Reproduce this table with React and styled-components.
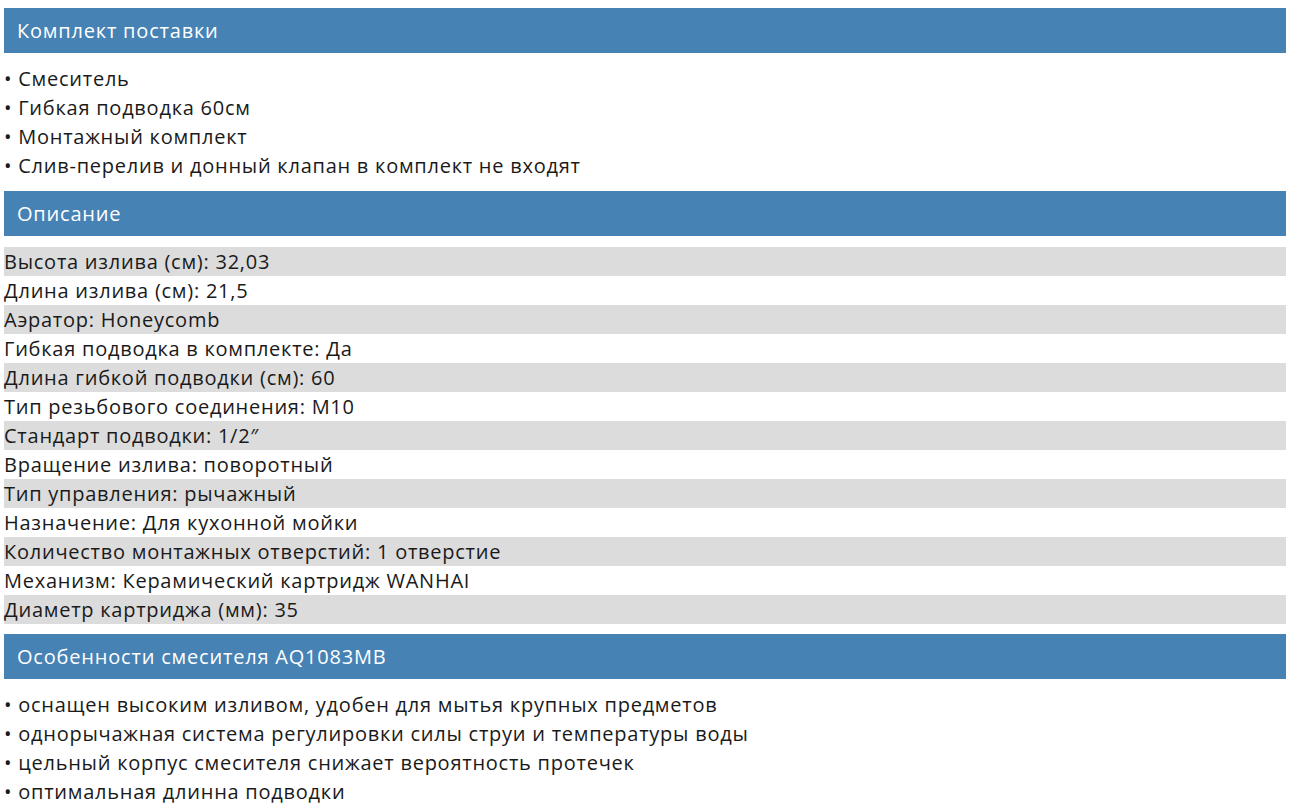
import styled, { createGlobalStyle } from "styled-components";

const GlobalStyle = createGlobalStyle`
  body {
    margin: 0;
    background: #fff;
    font-family: "Open Sans", "Liberation Sans", sans-serif;
    color: #1a1a1a;
  }
`;

const Page = styled.div`
  padding: 8px 7px 0 4px;
`;

const Header = styled.div`
  height: 45px;
  display: flex;
  align-items: center;
  padding-left: 13px;
  background: #4682b4;
  color: #fff;
  font-size: 20px;
  letter-spacing: 0.8px;
`;

const List = styled.ul`
  list-style: none;
  margin: 11px 0;
  padding: 0;
`;

const Item = styled.li`
  height: 29px;
  line-height: 29px;
  font-size: 20px;
  letter-spacing: 0.75px;
  &::before {
    content: "• ";
  }
`;

const Table = styled.div`
  margin: 11px 0 10px;
`;

const Row = styled.div`
  height: 29px;
  line-height: 29px;
  font-size: 20px;
  letter-spacing: 0.75px;
  background: ${({ $odd }) => ($odd ? "#dcdcdc" : "#fff")};
`;

const kit = [
  "Смеситель",
  "Гибкая подводка 60см",
  "Монтажный комплект",
  "Слив-перелив и донный клапан в комплект не входят",
];

const specs = [
  "Высота излива (см): 32,03",
  "Длина излива (см): 21,5",
  "Аэратор: Honeycomb",
  "Гибкая подводка в комплекте: Да",
  "Длина гибкой подводки (см): 60",
  "Тип резьбового соединения: M10",
  "Стандарт подводки: 1/2″",
  "Вращение излива: поворотный",
  "Тип управления: рычажный",
  "Назначение: Для кухонной мойки",
  "Количество монтажных отверстий: 1 отверстие",
  "Механизм: Керамический картридж WANHAI",
  "Диаметр картриджа (мм): 35",
];

const features = [
  "оснащен высоким изливом, удобен для мытья крупных предметов",
  "однорычажная система регулировки силы струи и температуры воды",
  "цельный корпус смесителя снижает вероятность протечек",
  "оптимальная длинна подводки",
];

export default function App() {
  return (
    <Page>
      <GlobalStyle />
      <Header>Комплект поставки</Header>
      <List>
        {kit.map((t) => (
          <Item key={t}>{t}</Item>
        ))}
      </List>
      <Header>Описание</Header>
      <Table>
        {specs.map((t, i) => (
          <Row key={t} $odd={i % 2 === 0}>
            {t}
          </Row>
        ))}
      </Table>
      <Header>Особенности смесителя AQ1083MB</Header>
      <List>
        {features.map((t) => (
          <Item key={t}>{t}</Item>
        ))}
      </List>
    </Page>
  );
}
